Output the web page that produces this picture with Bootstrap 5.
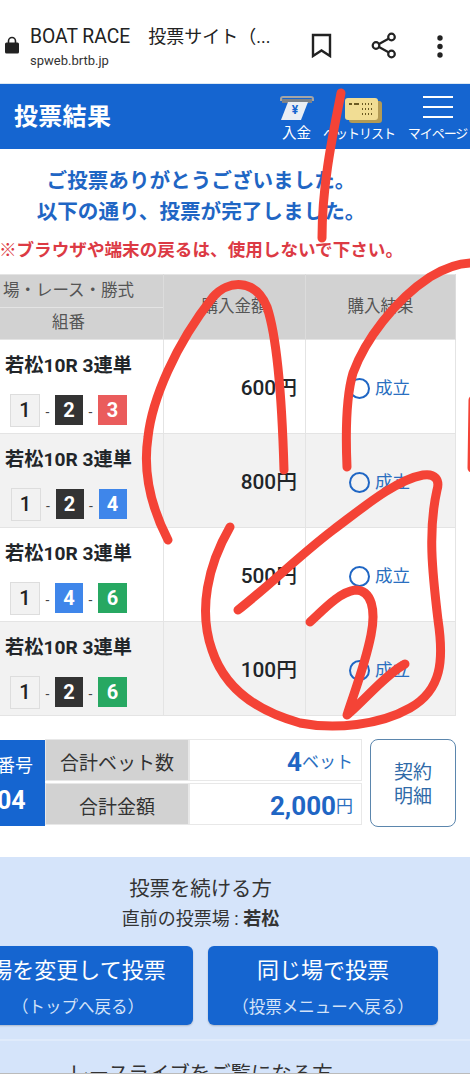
<!DOCTYPE html>
<html lang="ja">
<head>
  <meta charset="UTF-8" />
  <meta name="viewport" content="width=device-width, initial-scale=1.0"/>
  <title>投票結果</title>
  <link href="https://cdn.jsdelivr.net/npm/bootstrap@5.3.0/dist/css/bootstrap.min.css" rel="stylesheet"/>
  <style>
    html, body { height: 1082px; overflow: hidden; }
    body { font-family: Roboto, "Noto Sans CJK JP", sans-serif; color: #222; background: #fff; position: relative; }

    .chrome-bar { height: 84px; padding-top: 26px; border-bottom: 1px solid #dce8f2; }
    .chrome-lock { width: 14px; margin: 10px 11px 0 5px; }
    .chrome-title { font-size: 18px; line-height: 22px; white-space: nowrap; }
    .chrome-title span { font-size: 19.3px; }
    .chrome-url { font-size: 13px; line-height: 18px; margin-top: 4px; color: #333; }
    .chrome-actions { position: absolute; top: 30px; left: 0; width: 470px; height: 32px; }
    .chrome-actions svg { position: absolute; top: 0; }

    .app-head { height: 65px; background: #1565d0; color: #fff; }
    .app-title { font-size: 24px; font-weight: 700; margin-left: 14px; letter-spacing: .3px; }
    .head-link { font-size: 13px; line-height: 16px; letter-spacing: -1px; white-space: nowrap; padding-top: 4px; text-align: center; }
    .head-link svg { display: block; margin: 0 auto 1px; }
    .head-cash { width: 53px; font-size: 14.5px; letter-spacing: 0; }
    .head-bet { width: 70px; margin-right: 12px; }
    .head-bet svg { margin-left: 22px; }
    .head-my { width: 65px; }
    .head-my svg { margin-bottom: 8px; }

    .shifted { margin-left: -26px; width: 496px; }
    .thanks { padding: 17px 42px 0 0; font-size: 20.6px; line-height: 31px; font-weight: 700; color: #1f66c4; white-space: nowrap; }
    .warn { padding: 9px 42px 0 0; height: 46px; font-size: 17.6px; line-height: 26px; font-weight: 700; color: #dc3a44; white-space: nowrap; }

    .vote-table { width: 482px; table-layout: fixed; margin: 0 0 0 -1px; border-color: #e4e4e4; }
    .vote-table th { --bs-table-bg: #d2d2d2; font-weight: 400; font-size: 16.5px; color: #555; padding: 1px 0 0; height: 32.5px; text-align: center; vertical-align: middle; border-color: #dcdcdc; }
    .vote-table td { padding: 0; height: 94px; vertical-align: middle; }
    .vote-table .alt-line td { --bs-table-bg: #f2f2f2; }
    .race-name { font-size: 19.2px; font-weight: 700; line-height: 26px; text-align: center; margin: 6px 0 15px; white-space: nowrap; }
    .waku { width: 29px; height: 30px; font-size: 20px; font-weight: 700; line-height: 30px; text-align: center; color: #fff; }
    .waku-1 { width: 30px; height: 33px; line-height: 31px; background: #f2f2f2; color: #222; border: 1px solid #ddd; font-weight: 500; }
    .waku-2 { background: #333; width: 28px; }
    .waku-3 { background: #ea5c5c; }
    .waku-4 { background: #3f86ea; width: 28px; }
    .waku-6 { background: #27a862; }
    .dash { width: 15px; text-align: center; font-size: 14px; color: #444; padding-top: 5px; }
    .price { font-size: 20.8px; font-weight: 500; text-align: right; padding: 5px 8px 0 0 !important; }
    .ring { width: 21px; height: 21px; border: 2.5px solid #1f66c4; border-radius: 50%; margin: 0 5px 0 43px; }
    .done { font-size: 17.5px; color: #2a6fc0; }
    .vote-table .result-cell { padding-top: 4px; }

    .sum-wrap { margin-top: 23px; height: 88px; }
    .ticket-no { width: 96px; margin-left: -25px; height: 86px; margin-top: 1px; background: #1565d0; color: #fff; text-align: center; font-size: 18px; line-height: 22px; padding-top: 5px; }
    .ticket-no b { font-size: 25px; line-height: 30px; margin-top: 9px; }
    .sum-cell { height: 42px; border: 1px solid #e8e8e8; padding-top: 5px; }
    .sum-label { width: 144px; background: #d2d2d2; font-size: 19px; color: #333; padding-top: 9px; }
    .sum-value { width: 173px; font-size: 17px; color: #2a6fc0; padding-right: 8px; }
    .sum-value b { font-size: 26px; color: #1f66c4; font-weight: 700; }
    .sum-gap { margin-top: 2px; }
    .detail-btn { --bs-btn-padding-x: 0; --bs-btn-padding-y: 0; width: 86px; height: 88px; margin: 0 0 0 8px; padding-top: 4px; border: 1px solid #5b86ad; border-radius: 8px; font-size: 19px; line-height: 24px; color: #2f6aa8; background: #fff; }

    .next-box { margin-top: 30px; height: 240px; background: #d5e4fa; color: #333; }
    .next-inner { margin-left: -37px; width: 475px; padding-top: 17px; text-align: center; }
    .next-title { font-size: 20.4px; line-height: 30px; }
    .next-sub { font-size: 18px; line-height: 30px; }
    .vote-btn { --bs-btn-padding-x: 0; --bs-btn-padding-y: 0; width: 230px; height: 79px; padding-top: 3px; background: #1565d0; border: 0; border-radius: 6px; color: #fff; font-size: 22px; line-height: 30px; box-shadow: 0 1px 2px rgba(0,0,0,.2); }
    .vote-btn span { display: block; font-size: 16.5px; line-height: 22px; margin-top: 11px; color: #d3e2f8; }
    .next-line { border-top: 2px solid #e0ebfb; margin-top: 14px; }
    .live-title { margin-left: -37px; width: 475px; font-size: 20.4px; line-height: 30px; padding-top: 18px; text-align: center; }

    .bottom-edge { position: absolute; left: 0; top: 1073px; width: 470px; height: 9px; background: #fff; border-top: 1px solid #bbb; }
    .scribble { position: absolute; left: 0; top: 0; pointer-events: none; }
    .scribble path { fill: none; stroke: #f44336; stroke-width: 9; stroke-linecap: round; stroke-linejoin: round; }
  </style>
</head>
<body>
  <div class="chrome-bar d-flex">
    <svg class="chrome-lock" height="18" viewBox="0 0 14 18"><path d="M3.5 7V5a3.5 3.5 0 0 1 7 0v2" fill="none" stroke="#222" stroke-width="1.6"/><rect y="6.5" width="14" height="11" rx="1.5" fill="#222"/></svg>
    <div>
      <div class="chrome-title"><span>BOAT RACE</span>　投票サイト（...</div>
      <div class="chrome-url">spweb.brtb.jp</div>
    </div>
  </div>
  <div class="chrome-actions">
    <svg style="left:311px;top:3px" width="21" height="25" viewBox="0 0 21 25"><path d="M2 2h17v21l-8.500-5.500L2 23z" fill="none" stroke="#222" stroke-width="2.400"/></svg>
    <svg style="left:371px;top:2px" width="26" height="27" viewBox="0 0 26 27"><g fill="none" stroke="#222" stroke-width="2.200"><circle cx="20.500" cy="5" r="3.300"/><circle cx="5" cy="13.500" r="3.300"/><circle cx="20.500" cy="22" r="3.300"/><path d="M8 12l9.500-5.300M8 15l9.500 5.300"/></g></svg>
    <svg style="left:436px;top:5px" width="8" height="24" viewBox="0 0 8 24"><circle cx="4" cy="3" r="2.700" fill="#222"/><circle cx="4" cy="11.500" r="2.700" fill="#222"/><circle cx="4" cy="20" r="2.700" fill="#222"/></svg>
  </div>

  <header class="app-head d-flex align-items-center">
    <div class="app-title flex-grow-1">投票結果</div>
    <div class="head-link head-cash">
      <svg width="34" height="29" viewBox="0 0 34 29"><path d="M1 5V3a2 2 0 0 1 2-2h28a2 2 0 0 1 2 2v2" fill="none" stroke="#a5a5a5" stroke-width="2"/><rect x="2" y="3" width="30" height="4" fill="#7c8288"/><path d="M8 6h20l-7 18H1z" fill="#e9eef4"/><text x="15" y="18" font-size="12" font-weight="700" fill="#1565d0" text-anchor="middle">¥</text></svg>
      入金
    </div>
    <div class="head-link head-bet">
      <svg width="38" height="29" viewBox="0 0 38 29"><rect x="4" y="5" width="33" height="22" rx="3" fill="#b39b55"/><rect x="0" y="2" width="33" height="22" rx="3" fill="#f1dd94"/><path d="M4 8h3M9 8h5M17 8h1M20 8h1M23 8h1M26 8h1M17 13h1M20 13h1M23 13h1M26 13h1M17 18h1M20 18h1M23 18h1M26 18h1" stroke="#6b5a22" stroke-width="2"/></svg>
      ベットリスト
    </div>
    <div class="head-link head-my">
      <svg width="30" height="22" viewBox="0 0 30 22"><path d="M0 1h30M0 11h30M0 21h30" stroke="#fff" stroke-width="2"/></svg>
      マイページ
    </div>
  </header>

  <div class="shifted">
    <div class="thanks text-center">ご投票ありがとうございました。<br>以下の通り、投票が完了しました。</div>
    <div class="warn text-center">※ブラウザや端末の戻るは、使用しないで下さい。</div>

    <table class="table table-bordered vote-table">
      <colgroup><col style="width:190px"><col style="width:142px"><col style="width:150px"></colgroup>
      <thead>
        <tr><th>場・レース・勝式</th><th rowspan="2">購入金額</th><th rowspan="2">購入結果</th></tr>
        <tr><th>組番</th></tr>
      </thead>
      <tbody id="voteRows"></tbody>
    </table>

    <div class="sum-wrap d-flex">
      <div class="ticket-no d-flex flex-column justify-content-center">受付番号<b>0004</b></div>
      <div>
        <div class="d-flex">
          <div class="sum-cell sum-label d-flex align-items-center justify-content-center">合計ベット数</div>
          <div class="sum-cell sum-value d-flex align-items-center justify-content-end"><b>4</b>ベット</div>
        </div>
        <div class="d-flex sum-gap">
          <div class="sum-cell sum-label d-flex align-items-center justify-content-center">合計金額</div>
          <div class="sum-cell sum-value d-flex align-items-center justify-content-end"><b>2,000</b>円</div>
        </div>
      </div>
      <button type="button" class="btn detail-btn">契約<br>明細</button>
    </div>
  </div>

  <section class="next-box">
    <div class="next-inner">
      <div class="next-title">投票を続ける方</div>
      <div class="next-sub">直前の投票場 : <b>若松</b></div>
      <div class="d-flex justify-content-between mt-2 pt-1">
        <button type="button" class="btn vote-btn">場を変更して投票<span>（トップへ戻る）</span></button>
        <button type="button" class="btn vote-btn">同じ場で投票<span>（投票メニューへ戻る）</span></button>
      </div>
    </div>
    <div class="next-line"></div>
    <div class="live-title">レースライブをご覧になる方</div>
  </section>

  <div class="bottom-edge"></div>

  <svg class="scribble" width="470" height="1082" viewBox="0 0 470 1082">
    <path d="M341 93C335 125 322 180 322 238"/>
    <path d="M168 540C150 505 143 470 148 437C152 400 175 345 213 297C228 280 255 278 267 307C278 340 282 400 284 470"/>
    <path d="M347 467C345 420 348 390 353 373C365 340 395 300 430 277C445 268 460 263 472 263"/>
    <path d="M473 400L472 468"/>
    <path d="M238 610C270 585 300 555 333 530C360 510 395 480 423 475C435 473 440 480 437 490C428 530 432 570 438 620C444 660 442 690 410 708C380 725 335 730 300 723C260 712 225 690 212 650C198 610 208 565 230 527"/>
    <path d="M310 622C325 608 340 592 355 590C372 590 376 610 371 635C365 665 355 690 347 715C365 700 385 675 405 664"/>
  </svg>

  <script src="https://cdn.jsdelivr.net/npm/bootstrap@5.3.0/dist/js/bootstrap.bundle.min.js"></script>
  <script>
    const rows = [
      { second: 2, third: 3, price: "600" },
      { second: 2, third: 4, price: "800" },
      { second: 4, third: 6, price: "500" },
      { second: 2, third: 6, price: "100" }
    ];

    // Build one table line per bet
    document.getElementById("voteRows").innerHTML = rows.map((row, i) => `
      <tr class="${i % 2 ? "alt-line" : ""}">
        <td>
          <div class="race-name">若松10R 3連単</div>
          <div class="d-flex justify-content-center align-items-center">
            <div class="waku waku-1">1</div><div class="dash">-</div>
            <div class="waku waku-${row.second}">${row.second}</div><div class="dash">-</div>
            <div class="waku waku-${row.third}">${row.third}</div>
          </div>
        </td>
        <td class="price">${row.price}円</td>
        <td class="result-cell"><div class="d-flex align-items-center"><div class="ring"></div><div class="done">成立</div></div></td>
      </tr>`).join("");
  </script>
</body>
</html>
